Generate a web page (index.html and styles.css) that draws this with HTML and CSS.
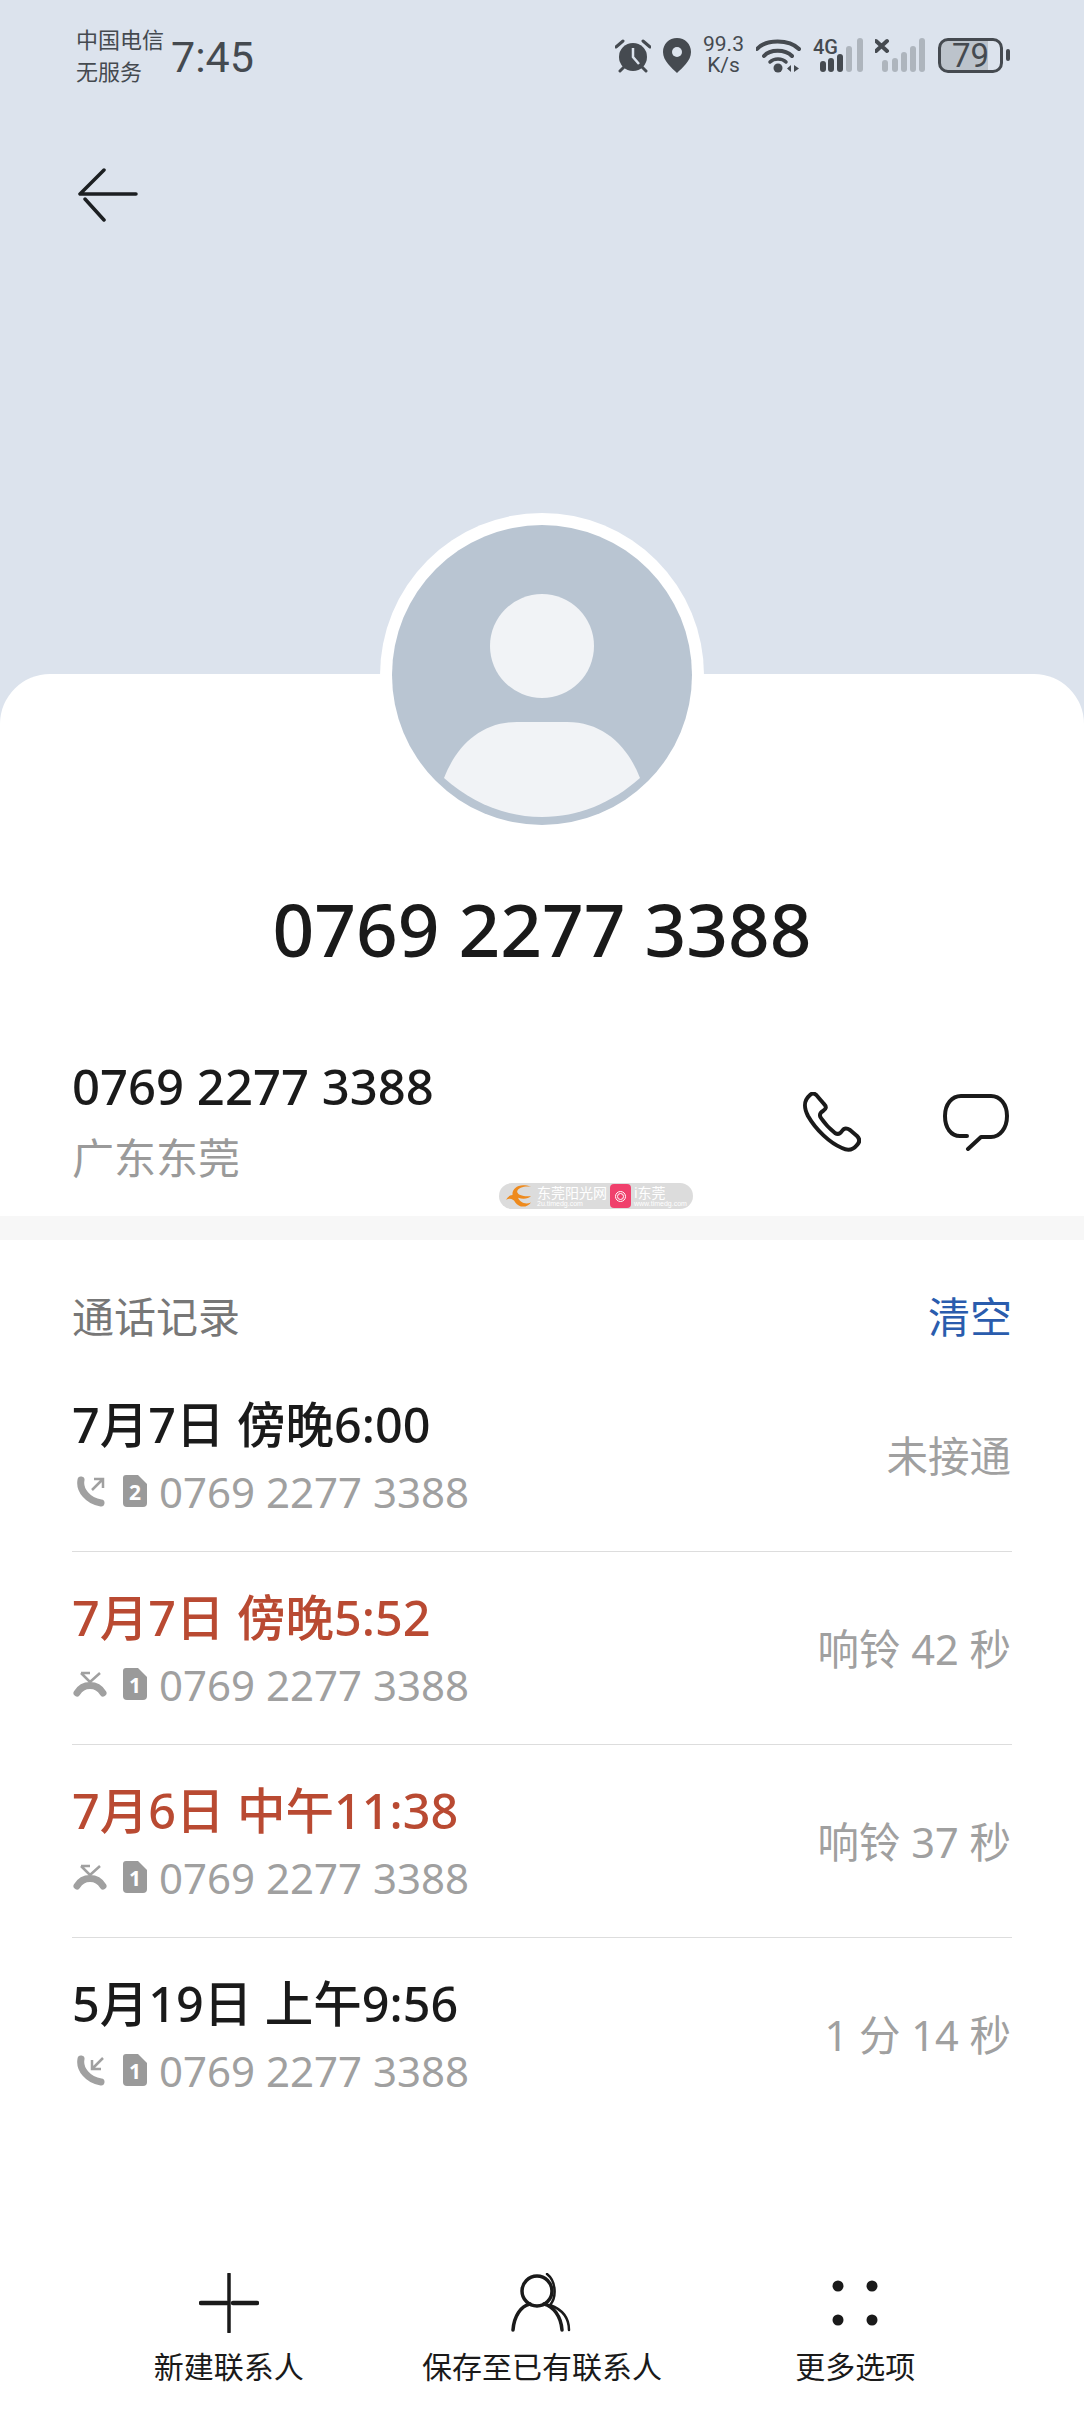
FILE: index.html
```html
<!DOCTYPE html>
<html lang="zh-CN">
<head>
    <meta charset="UTF-8">
    <title>0769 2277 3388</title>
    <link rel="stylesheet" href="styles.css">
</head>
<body>
<svg class="defs" width="0" height="0">
    <symbol id="handset" viewBox="0 0 30 31">
        <path d="M6 4 C4 14 13 25 26 27" fill="none" stroke="currentColor" stroke-width="7" stroke-linecap="round"/>
    </symbol>
    <symbol id="hangup" viewBox="0 0 34 26">
        <path d="M4 22 C10 12 24 12 30 22" fill="none" stroke="currentColor" stroke-width="7" stroke-linecap="round"/>
        <path d="M8 2 H17 M8 2 L17 11 L27 2" fill="none" stroke="currentColor" stroke-width="2.5"/>
    </symbol>
    <symbol id="sim" viewBox="0 0 24 32">
        <path d="M3 0 H15 L24 9 V28 Q24 32 20 32 H4 Q0 32 0 28 V3 Q0 0 3 0 Z" fill="currentColor"/>
    </symbol>
</svg>

<div class="status-bar">
    <div class="status-left">
        <div class="carrier">
            <div>中国电信</div>
            <div>无服务</div>
        </div>
        <div class="clock">7:45</div>
    </div>
    <div class="status-right">
        <svg class="st-alarm" width="36" height="35" viewBox="0 0 36 35">
            <circle cx="18" cy="19" r="14" fill="#454a50"/>
            <path d="M18 10 V19 L24 26" fill="none" stroke="#dce3ed" stroke-width="2.5"/>
            <path d="M1 9 L8 3 M35 9 L28 3 M5 33 L9 29 M31 33 L27 29" stroke="#454a50" stroke-width="3" stroke-linecap="round"/>
        </svg>
        <svg class="st-pin" width="28" height="35" viewBox="0 0 28 35">
            <path d="M14 0 C6 0 0 6 0 14 C0 23 9 30 14 35 C19 30 28 23 28 14 C28 6 22 0 14 0 Z" fill="#454a50"/>
            <circle cx="14" cy="14" r="5" fill="#dce3ed"/>
        </svg>
        <div class="st-speed">
            <div>99.3</div>
            <div>K/s</div>
        </div>
        <svg class="st-wifi" width="45" height="35" viewBox="0 0 45 35">
            <path d="M1 11 C10 1 33 1 43 11" fill="none" stroke="#454a50" stroke-width="4" stroke-linecap="round"/>
            <path d="M8 18 C14 11 29 11 36 18" fill="none" stroke="#454a50" stroke-width="4" stroke-linecap="round"/>
            <path d="M14 24 C18 20 26 20 30 24" fill="none" stroke="#454a50" stroke-width="3.5" stroke-linecap="round"/>
            <circle cx="22" cy="30" r="4.5" fill="#454a50"/>
            <path d="M35 27 V34 L31 30.5 Z M38 27 V34 L43 30.5 Z" fill="#454a50"/>
        </svg>
        <div class="st-signal">
            <span class="st-net">4G</span>
            <svg width="50" height="35" viewBox="0 0 50 35">
                <rect x="7" y="23" width="6" height="11" rx="3" fill="#454a50"/>
                <rect x="15" y="20" width="6" height="14" rx="3" fill="#454a50"/>
                <rect x="24" y="16" width="6" height="18" rx="3" fill="#454a50"/>
                <rect x="33" y="8" width="6" height="26" rx="3" fill="#aeb5bd"/>
                <rect x="44" y="0" width="6" height="34" rx="3" fill="#aeb5bd"/>
            </svg>
        </div>
        <svg class="st-signal2" width="50" height="35" viewBox="0 0 50 35">
            <path d="M1 3 L12 13 M12 3 L1 13" stroke="#454a50" stroke-width="4" stroke-linecap="round"/>
            <rect x="7" y="22" width="6" height="12" rx="3" fill="#aeb5bd"/>
            <rect x="17" y="20" width="6" height="14" rx="3" fill="#aeb5bd"/>
            <rect x="26" y="14" width="6" height="20" rx="3" fill="#aeb5bd"/>
            <rect x="35" y="8" width="6" height="26" rx="3" fill="#aeb5bd"/>
            <rect x="44" y="0" width="6" height="34" rx="3" fill="#aeb5bd"/>
        </svg>
        <div class="battery">
            <div class="battery-body">79</div>
            <div class="battery-nub"></div>
        </div>
    </div>
</div>

<div class="top-area">
    <svg class="back" width="60" height="54" viewBox="0 0 60 54">
        <path d="M2 26 H58 M26 2 L2 26 M7 31 L26 52" fill="none" stroke="#1c1f22" stroke-width="3.5" stroke-linecap="round"/>
    </svg>
</div>

<div class="card">
    <div class="avatar">
        <svg width="300" height="300" viewBox="0 0 300 300">
            <circle cx="150" cy="150" r="150" fill="#b9c5d2"/>
            <circle cx="150" cy="121" r="52" fill="#f1f3f6"/>
            <path d="M52 253 C64 222 88 197 125 197 H175 C212 197 236 222 248 253 C220 278 186 292 150 292 C114 292 80 278 52 253 Z" fill="#f1f3f6"/>
        </svg>
    </div>

    <h1 class="title">0769 2277 3388</h1>

    <div class="detail">
        <div class="detail-text">
            <div class="detail-number">0769 2277 3388</div>
            <div class="detail-region">广东东莞</div>
        </div>
        <div class="detail-actions">
            <svg width="59" height="60" viewBox="0 0 59 60">
                <path d="M8 3 C11 0 14 2 16 5 L22 12 C25 15 24 17 21 19 C18 21 17 23 19 26 C23 32 28 37 33 41 C36 43 38 42 40 39 C42 36 45 36 48 38 L55 44 C58 47 58 50 55 53 C51 58 46 59 40 56 C28 51 14 38 6 24 C2 16 1 9 8 3 Z" fill="none" stroke="#1a1a1a" stroke-width="4" stroke-linejoin="round"/>
            </svg>
            <svg width="66" height="57" viewBox="0 0 66 57">
                <path d="M24 42 H17 C8 42 2 34 2 22 C2 10 9 2 18 2 H48 C57 2 64 10 64 22 C64 34 57 43 48 43 H38 L25 55" fill="none" stroke="#1a1a1a" stroke-width="4" stroke-linecap="round" stroke-linejoin="round"/>
            </svg>
        </div>
        <div class="watermark">
            <svg width="32" height="24" viewBox="0 0 28 26">
                <path d="M27 3 C14 -2 6 5 7 12 C4 12 2 14 0 17 C4 15 8 16 10 20 C14 26 23 26 27 20 C21 23 15 20 13 15 C19 17 24 16 27 13 C20 14 12 12 12 8 C13 4 20 2 27 3 Z" fill="#ee8a1d"/>
            </svg>
            <div class="wm-block wm-first">
                <div class="wm-main">东莞阳光网</div>
                <div class="wm-small">2u.timedg.com</div>
            </div>
            <span class="wm-icon"><span class="wm-eye"></span></span>
            <div class="wm-block">
                <div class="wm-main">i东莞</div>
                <div class="wm-small">www.timedg.com</div>
            </div>
        </div>
    </div>

    <div class="gap-bar"></div>

    <div class="log-head">
        <span class="log-title">通话记录</span>
        <span class="log-clear">清空</span>
    </div>

    <div class="log-list">
        <div class="log-row">
            <div>
                <div class="log-time">7月7日 傍晚6:00</div>
                <div class="log-sub">
                    <svg class="ic-call" width="30" height="31" viewBox="0 0 30 31">
                        <use href="#handset"/>
                        <path d="M17 14 L28 3 M19 3 H28 V12" fill="none" stroke="currentColor" stroke-width="2.5"/>
                    </svg>
                    <span class="sim"><svg width="24" height="32"><use href="#sim"/></svg><b>2</b></span>
                    <span>0769 2277 3388</span>
                </div>
            </div>
            <div class="log-result">未接通</div>
        </div>
        <div class="log-row">
            <div>
                <div class="log-time missed">7月7日 傍晚5:52</div>
                <div class="log-sub">
                    <svg class="ic-missed" width="34" height="26"><use href="#hangup"/></svg>
                    <span class="sim"><svg width="24" height="32"><use href="#sim"/></svg><b>1</b></span>
                    <span>0769 2277 3388</span>
                </div>
            </div>
            <div class="log-result">响铃 42 秒</div>
        </div>
        <div class="log-row">
            <div>
                <div class="log-time missed">7月6日 中午11:38</div>
                <div class="log-sub">
                    <svg class="ic-missed" width="34" height="26"><use href="#hangup"/></svg>
                    <span class="sim"><svg width="24" height="32"><use href="#sim"/></svg><b>1</b></span>
                    <span>0769 2277 3388</span>
                </div>
            </div>
            <div class="log-result">响铃 37 秒</div>
        </div>
        <div class="log-row">
            <div>
                <div class="log-time">5月19日 上午9:56</div>
                <div class="log-sub">
                    <svg class="ic-call" width="30" height="31" viewBox="0 0 30 31">
                        <use href="#handset"/>
                        <path d="M28 3 L17 14 M17 5 V14 H26" fill="none" stroke="currentColor" stroke-width="2.5"/>
                    </svg>
                    <span class="sim"><svg width="24" height="32"><use href="#sim"/></svg><b>1</b></span>
                    <span>0769 2277 3388</span>
                </div>
            </div>
            <div class="log-result">1 分 14 秒</div>
        </div>
    </div>

    <div class="bottom-bar">
        <div class="bottom-item">
            <svg width="60" height="60" viewBox="0 0 60 60">
                <path d="M30 1 V59" stroke="#1a1a1a" stroke-width="3.5" stroke-linecap="round"/>
                <path d="M2 30 H28 M34 30 H58" stroke="#1a1a1a" stroke-width="4.5" stroke-linecap="round"/>
            </svg>
            <span>新建联系人</span>
        </div>
        <div class="bottom-item">
            <svg width="62" height="60" viewBox="0 0 62 60">
                <circle cx="26" cy="18" r="15" fill="none" stroke="#1a1a1a" stroke-width="3.5"/>
                <path d="M2 57 C3 43 10 33 19 31 M33 31 C42 33 50 43 51 57" fill="none" stroke="#1a1a1a" stroke-width="3.5" stroke-linecap="round"/>
                <path d="M36 1 C45 8 46 24 39 32 C50 36 58 44 58 57" fill="none" stroke="#1a1a1a" stroke-width="2.5" stroke-linecap="round"/>
            </svg>
            <span>保存至已有联系人</span>
        </div>
        <div class="bottom-item">
            <svg width="60" height="60" viewBox="0 0 60 60">
                <circle cx="13" cy="13" r="5.5" fill="#1a1a1a"/>
                <circle cx="47" cy="13" r="5.5" fill="#1a1a1a"/>
                <circle cx="13" cy="47" r="5.5" fill="#1a1a1a"/>
                <circle cx="47" cy="47" r="5.5" fill="#1a1a1a"/>
            </svg>
            <span>更多选项</span>
        </div>
    </div>
</div>
</body>
</html>
```

FILE: styles.css
```css
* {
    box-sizing: border-box;
}

body {
    margin: 0;
    width: 1084px;
    height: 2412px;
    display: flex;
    flex-direction: column;
    overflow: hidden;
    background-color: #dce3ed;
    color: #1a1a1a;
    font-family: "Noto Sans", "Noto Sans CJK SC", sans-serif;
}

svg {
    display: block;
    flex-shrink: 0;
}

.defs {
    position: absolute;
}

/* status bar */
.status-bar {
    height: 110px;
    padding: 0 74px 0 76px;
    display: flex;
    justify-content: space-between;
    align-items: center;
    color: #454a50;
}

.status-left {
    display: flex;
    align-items: center;
    gap: 7px;
}

.carrier {
    font-size: 22px;
    line-height: 32px;
}

.clock {
    margin-top: 4px;
    font-family: Roboto, sans-serif;
    font-size: 43px;
    line-height: 50px;
}

.status-right {
    display: flex;
    align-items: center;
    gap: 12px;
}

.st-speed {
    width: 41px;
    font-family: Roboto, sans-serif;
    font-size: 21px;
    line-height: 21px;
    text-align: center;
    white-space: nowrap;
}

.st-signal {
    position: relative;
}

.st-net {
    position: absolute;
    left: 0;
    top: -1px;
    font-family: Roboto, sans-serif;
    font-size: 20px;
    font-weight: 500;
    line-height: 20px;
}

.battery {
    display: flex;
    align-items: center;
    gap: 3px;
    margin-left: 1px;
}

.battery-body {
    width: 65px;
    height: 35px;
    border: 3px solid #454a50;
    border-radius: 10px;
    background: linear-gradient(to right, #bcc3cb 80%, transparent 80%);
    font-family: Roboto, sans-serif;
    font-size: 33px;
    line-height: 29px;
    text-align: center;
}

.battery-nub {
    width: 4px;
    height: 12px;
    border-radius: 2px;
    background-color: #454a50;
}

/* blue header */
.top-area {
    height: 564px;
    padding: 58px 0 0 78px;
}

/* white sheet */
.card {
    flex: 1;
    display: flex;
    flex-direction: column;
    background-color: #fff;
    border-radius: 50px 50px 0 0;
}

.avatar {
    width: 324px;
    height: 324px;
    margin: -161px auto 0;
    padding: 12px;
    border-radius: 50%;
    background-color: #fff;
}

.title {
    margin: 50px 0 1px;
    font-size: 73px;
    font-weight: 500;
    line-height: 84px;
    text-align: center;
}

.detail {
    position: relative;
    padding: 86px 75px 30px 72px;
    display: flex;
    justify-content: space-between;
    align-items: center;
}

.detail-number {
    font-size: 49px;
    font-weight: 500;
    line-height: 56px;
}

.detail-region {
    margin-top: 16px;
    font-size: 42px;
    line-height: 56px;
    color: #9a9a9a;
}

.detail-actions {
    display: flex;
    align-items: center;
    gap: 82px;
}

.watermark {
    position: absolute;
    left: 499px;
    bottom: 7px;
    width: 194px;
    height: 26px;
    padding-left: 4px;
    display: flex;
    align-items: center;
    border-radius: 13px;
    background-color: #dcdcdc;
}

.wm-block {
    color: #fff;
    white-space: nowrap;
}

.wm-first {
    width: 71px;
    margin-left: 2px;
}

.wm-main {
    font-size: 14px;
    line-height: 15px;
}

.wm-small {
    font-family: "Liberation Sans", sans-serif;
    font-size: 7px;
    line-height: 8px;
}

.wm-icon {
    width: 21px;
    height: 24px;
    margin: 0 3px 0 2px;
    display: flex;
    align-items: center;
    justify-content: center;
    border-radius: 4px;
    background-color: #f0406c;
}

.wm-eye {
    width: 11px;
    height: 11px;
    border: 3px double #fff;
    border-radius: 50%;
}

.gap-bar {
    height: 24px;
    background-color: #f7f7f7;
}

/* call log */
.log-head {
    padding: 49px 72px 14px;
    display: flex;
    justify-content: space-between;
    font-size: 42px;
    line-height: 56px;
    color: #777;
}

.log-clear {
    color: #2a5cad;
}

.log-list {
    padding: 0 72px;
}

.log-row {
    height: 193px;
    padding-top: 37px;
    display: flex;
    justify-content: space-between;
    border-bottom: 1px solid #ddd;
}

.log-row:last-child {
    border-bottom: none;
}

.log-time {
    font-size: 48.5px;
    font-weight: 500;
    line-height: 56px;
}

.missed {
    color: #b94a32;
}

.log-sub {
    margin-top: 11px;
    height: 56px;
    display: flex;
    align-items: center;
    font-size: 42px;
    color: #a0a0a0;
}

.ic-call {
    margin: 0 18px 0 3px;
}

.ic-missed {
    margin: 0 16px 0 1px;
}

.sim {
    position: relative;
    margin-right: 12px;
    color: #9a9a9a;
}

.sim b {
    position: absolute;
    left: 0;
    top: 5px;
    width: 24px;
    font-size: 21px;
    line-height: 24px;
    text-align: center;
    color: #fff;
}

.log-result {
    align-self: center;
    margin: -40px 1px 0 0;
    font-size: 41.5px;
    color: #a0a0a0;
}

/* bottom actions */
.bottom-bar {
    margin-top: auto;
    padding: 0 72px 25px;
    display: grid;
    grid-template-columns: repeat(3, 1fr);
}

.bottom-item {
    display: flex;
    flex-direction: column;
    align-items: center;
    gap: 14px;
    font-size: 30px;
    line-height: 40px;
}
```
